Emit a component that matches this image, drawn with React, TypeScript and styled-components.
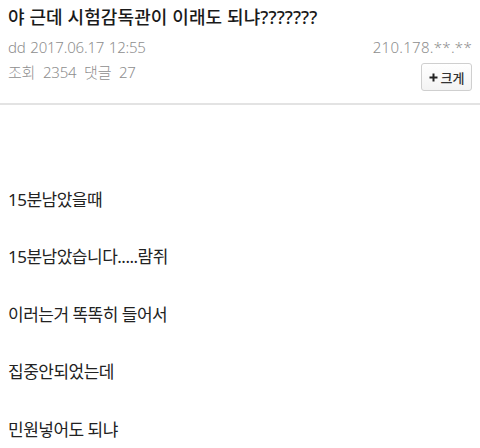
import { createGlobalStyle, styled } from "styled-components";

const GlobalStyle = createGlobalStyle`
  html, body {
    margin: 0;
    padding: 0;
    background: #ffffff;
  }
  body {
    font-family: "Noto Sans", "Noto Sans CJK KR", sans-serif;
    color: #222222;
  }
`;

const Page = styled.div`
  width: 480px;
  height: 448px;
  overflow: hidden;
  background: #ffffff;
`;

const Header = styled.header`
  padding: 5px 8px 0;
  height: 98px;
`;

const Title = styled.h1`
  margin: 0;
  font-size: 18px;
  font-weight: 500;
  line-height: 24px;
  color: #1a1a1a;
  letter-spacing: 0.1px;
`;

const MetaRow = styled.div`
  display: flex;
  justify-content: space-between;
  align-items: flex-start;
  margin-top: 6px;
`;

const MetaColumn = styled.div<{ $align?: "start" | "end" }>`
  display: flex;
  flex-direction: column;
  align-items: ${p => (p.$align === "end" ? "flex-end" : "flex-start")};
`;

const MetaText = styled.span<{ $wide?: boolean }>`
  font-size: 15px;
  font-weight: 300;
  line-height: 25px;
  color: #8e8e8e;
  letter-spacing: -0.2px;
  word-spacing: ${p => (p.$wide ? "4px" : "1px")};
`;

const IpText = styled(MetaText)`
  letter-spacing: 0.3px;
`;

const SizeButton = styled.button`
  margin-top: 3px;
  height: 28px;
  width: 51px;
  padding: 0;
  border: 1px solid #cfcfcf;
  border-radius: 3px;
  background: linear-gradient(#ffffff, #f3f3f3);
  font-family: inherit;
  font-size: 13px;
  font-weight: 500;
  color: #333333;
  display: flex;
  align-items: center;
  justify-content: center;
  gap: 3px;
`;

const Divider = styled.hr`
  margin: 0;
  border: none;
  border-top: 2px solid #e3e3e3;
`;

const Body = styled.div`
  padding: 83px 8px 0;
  display: flex;
  flex-direction: column;
  gap: 33.4px;
`;

const Line = styled.p`
  margin: 0;
  font-size: 17px;
  line-height: 24px;
  color: #222222;
  letter-spacing: -0.5px;
`;

const lines = [
  "15분남았을때",
  "15분남았습니다.....람쥐",
  "이러는거 똑똑히 들어서",
  "집중안되었는데",
  "민원넣어도 되냐",
];

export default function App() {
  return (
    <Page>
      <GlobalStyle />
      <Header>
        <Title>야 근데 시험감독관이 이래도 되냐???????</Title>
        <MetaRow>
          <MetaColumn>
            <MetaText>dd 2017.06.17 12:55</MetaText>
            <MetaText $wide>조회 2354 댓글 27</MetaText>
          </MetaColumn>
          <MetaColumn $align="end">
            <IpText>210.178.**.**</IpText>
            <SizeButton>
              <svg width="9" height="9" viewBox="0 0 9 9">
                <path d="M4.5 0.5v8M0.5 4.5h8" stroke="#222" strokeWidth="2" />
              </svg>
              크게
            </SizeButton>
          </MetaColumn>
        </MetaRow>
      </Header>
      <Divider />
      <Body>
        {lines.map(l => (
          <Line key={l}>{l}</Line>
        ))}
      </Body>
    </Page>
  );
}
